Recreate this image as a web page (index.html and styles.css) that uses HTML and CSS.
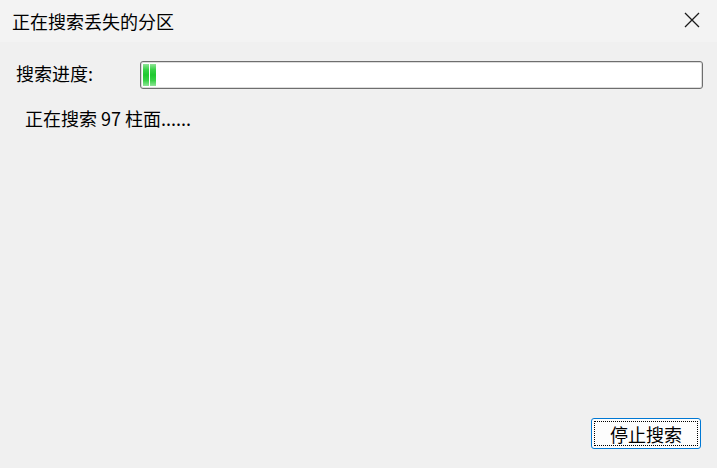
FILE: index.html
```html
<!DOCTYPE html>
<html lang="zh-CN">
<head>
<meta charset="utf-8">
<link rel="stylesheet" href="styles.css">
</head>
<body>
<div class="window">
  <div class="titlebar">
    <span class="title">正在搜索丢失的分区</span>
    <svg class="close" width="16" height="16" viewBox="0 0 16 16"><path d="M1 1 L15 15 M15 1 L1 15" stroke="#1a1a1a" stroke-width="1.3" fill="none"/></svg>
  </div>
  <div class="content">
    <div class="row">
      <span class="label">搜索进度:</span>
      <div class="progress">
        <div class="seg"></div>
        <div class="seg"></div>
      </div>
    </div>
    <div class="status">正在搜索 97 柱面......</div>
    <div class="spacer"></div>
    <div class="actions">
      <button class="btn"><span class="focus">停止搜索</span></button>
    </div>
  </div>
</div>
</body>
</html>
```
FILE: styles.css
```css
html, body {
  margin: 0;
  padding: 0;
}
body {
  width: 717px;
  height: 468px;
  overflow: hidden;
  background: #f0f0f0;
  font-family: "Noto Sans CJK SC", "Noto Sans", sans-serif;
  font-size: 18px;
  color: #000;
}
.window {
  display: flex;
  flex-direction: column;
  height: 468px;
}
.titlebar {
  height: 42px;
  flex: none;
  display: flex;
  align-items: center;
  background: #f3f3f3;
  padding-left: 12px;
  padding-right: 17px;
}
.title {
  flex: 1;
  line-height: 1;
  margin-top: -1px;
}
.close {
  display: block;
  margin-top: -2px;
}
.content {
  flex: 1;
  display: flex;
  flex-direction: column;
  padding: 19px 14px 19px 16px;
}
.row {
  display: flex;
  align-items: center;
}
.label {
  width: 124px;
  line-height: 1;
  margin-top: -4px;
}
.progress {
  flex: 1;
  height: 28px;
  box-sizing: border-box;
  border: 1px solid #6e6e6e;
  border-radius: 3px;
  box-shadow: inset 0 0 0 1px #dcdcdc;
  background: #fff;
  display: flex;
  gap: 1px;
  padding: 2px;
}
.seg {
  width: 6px;
  background: linear-gradient(to bottom, #8fe497 0%, #3ad248 25%, #1fc92f 50%, #3ad248 75%, #8fe497 100%);
}
.status {
  margin-top: 20px;
  margin-left: 9px;
  line-height: 1;
}
.spacer {
  flex: 1;
}
.actions {
  display: flex;
  justify-content: flex-end;
  padding-right: 2px;
}
.btn {
  width: 110px;
  height: 31px;
  box-sizing: border-box;
  border: 1px solid #0078d4;
  border-radius: 3px;
  background: #fdfdfd;
  padding: 2px;
  font-family: inherit;
  font-size: 18px;
  color: #000;
  display: flex;
}
.focus {
  flex: 1;
  border: 1px dotted #000;
  display: flex;
  align-items: center;
  justify-content: center;
  line-height: 1;
}
```
